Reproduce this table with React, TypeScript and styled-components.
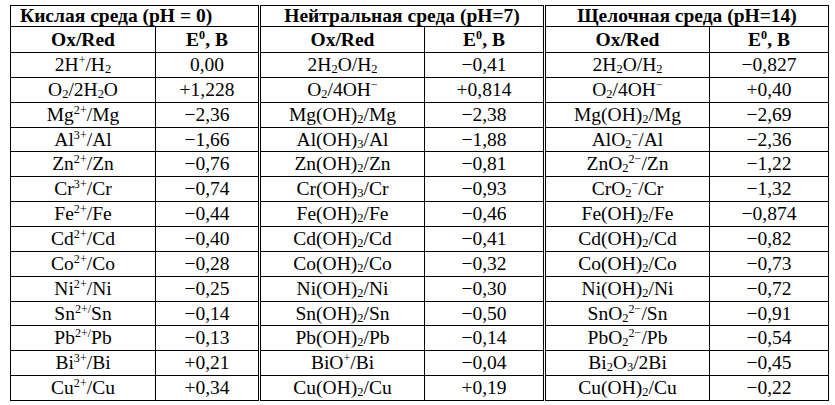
import React from "react";
import styled, { createGlobalStyle } from "styled-components";

const Global = createGlobalStyle`
  html, body { margin: 0; padding: 0; background: #fff; }
  body { font-family: "Liberation Serif", "Times New Roman", serif; color: #000; }
`;

const Page = styled.div`
  padding: 5px 0 0 10px;
`;

const Table = styled.table`
  border-collapse: collapse;
  table-layout: fixed;
  width: 819px;
  font-size: 19.5px;
`;

const GroupRow = styled.tr`
  height: 21px;
`;

const HeadRow = styled.tr`
  height: 26px;
`;

const DataRow = styled.tr`
  height: 24.86px;
`;

const GroupHead = styled.th<{ $left?: boolean; $double?: boolean }>`
  border: 1px solid #000;
  border-right: ${(p) => (p.$double ? "3px double #000" : "1px solid #000")};
  padding: 0 0 0 ${(p) => (p.$left ? "9px" : "0")};
  text-align: ${(p) => (p.$left ? "left" : "center")};
  font-weight: bold;
  line-height: 20px;
  white-space: nowrap;
`;

const HeadCell = styled.th<{ $double?: boolean }>`
  border: 1px solid #000;
  border-right: ${(p) => (p.$double ? "3px double #000" : "1px solid #000")};
  padding: 0;
  text-align: center;
  font-weight: bold;
  line-height: 22px;
`;

const Cell = styled.td<{ $double?: boolean }>`
  border: 1px solid #000;
  border-right: ${(p) => (p.$double ? "3px double #000" : "1px solid #000")};
  padding: 0;
  text-align: center;
  line-height: 22px;
  white-space: nowrap;
`;

const Sup = styled.span`
  font-size: 0.62em;
  vertical-align: 0.55em;
  line-height: 0;
`;

const Sub = styled.span`
  font-size: 0.64em;
  vertical-align: -0.2em;
  line-height: 0;
`;

const parse = (s: string) =>
  s.split(/(\^\{[^}]*\}|_\{[^}]*\})/).map((p, i) =>
    p.startsWith("^{") ? (
      <Sup key={i}>{p.slice(2, -1)}</Sup>
    ) : p.startsWith("_{") ? (
      <Sub key={i}>{p.slice(2, -1)}</Sub>
    ) : (
      <React.Fragment key={i}>{p}</React.Fragment>
    )
  );

const M = "\u2212";

const rows: string[][] = [
  ["2H^{+}/H_{2}", "0,00", "2H_{2}O/H_{2}", `${M}0,41`, "2H_{2}O/H_{2}", `${M}0,827`],
  ["O_{2}/2H_{2}O", "+1,228", `O_{2}/4OH^{${M}}`, "+0,814", `O_{2}/4OH^{${M}}`, "+0,40"],
  ["Mg^{2+}/Mg", `${M}2,36`, "Mg(OH)_{2}/Mg", `${M}2,38`, "Mg(OH)_{2}/Mg", `${M}2,69`],
  ["Al^{3+}/Al", `${M}1,66`, "Al(OH)_{3}/Al", `${M}1,88`, `AlO_{2}^{${M}}/Al`, `${M}2,36`],
  ["Zn^{2+}/Zn", `${M}0,76`, "Zn(OH)_{2}/Zn", `${M}0,81`, `ZnO_{2}^{2${M}}/Zn`, `${M}1,22`],
  ["Cr^{3+}/Cr", `${M}0,74`, "Cr(OH)_{3}/Cr", `${M}0,93`, `CrO_{2}^{${M}}/Cr`, `${M}1,32`],
  ["Fe^{2+}/Fe", `${M}0,44`, "Fe(OH)_{2}/Fe", `${M}0,46`, "Fe(OH)_{2}/Fe", `${M}0,874`],
  ["Cd^{2+}/Cd", `${M}0,40`, "Cd(OH)_{2}/Cd", `${M}0,41`, "Cd(OH)_{2}/Cd", `${M}0,82`],
  ["Co^{2+}/Co", `${M}0,28`, "Co(OH)_{2}/Co", `${M}0,32`, "Co(OH)_{2}/Co", `${M}0,73`],
  ["Ni^{2+}/Ni", `${M}0,25`, "Ni(OH)_{2}/Ni", `${M}0,30`, "Ni(OH)_{2}/Ni", `${M}0,72`],
  ["Sn^{2+/}Sn", `${M}0,14`, "Sn(OH)_{2}/Sn", `${M}0,50`, `SnO_{2}^{2${M}}/Sn`, `${M}0,91`],
  ["Pb^{2+/}Pb", `${M}0,13`, "Pb(OH)_{2}/Pb", `${M}0,14`, `PbO_{2}^{2${M}}/Pb`, `${M}0,54`],
  ["Bi^{3+}/Bi", "+0,21", "BiO^{+}/Bi", `${M}0,04`, "Bi_{2}O_{3}/2Bi", `${M}0,45`],
  ["Cu^{2+}/Cu", "+0,34", "Cu(OH)_{2}/Cu", "+0,19", "Cu(OH)_{2}/Cu", `${M}0,22`],
];

const widths = [145, 104, 165, 120, 165, 119];

export default function App() {
  return (
    <>
      <Global />
      <Page>
        <Table>
          <colgroup>
            {widths.map((w, i) => (
              <col key={i} style={{ width: w }} />
            ))}
          </colgroup>
          <thead>
            <GroupRow>
              <GroupHead colSpan={2} $left $double>
                Кислая среда (pH = 0)
              </GroupHead>
              <GroupHead colSpan={2} $double>
                Нейтральная среда (pH=7)
              </GroupHead>
              <GroupHead colSpan={2}>Щелочная среда (pH=14)</GroupHead>
            </GroupRow>
            <HeadRow>
              {[0, 1, 2].map((g) => (
                <React.Fragment key={g}>
                  <HeadCell>Ox/Red</HeadCell>
                  <HeadCell $double={g < 2}>
                    E<Sup>0</Sup>, B
                  </HeadCell>
                </React.Fragment>
              ))}
            </HeadRow>
          </thead>
          <tbody>
            {rows.map((r, ri) => (
              <DataRow key={ri}>
                {r.map((c, ci) => (
                  <Cell key={ci} $double={ci === 1 || ci === 3}>
                    {parse(c)}
                  </Cell>
                ))}
              </DataRow>
            ))}
          </tbody>
        </Table>
      </Page>
    </>
  );
}
